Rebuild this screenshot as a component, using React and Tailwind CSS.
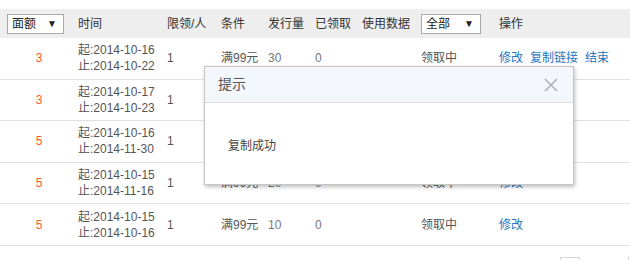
import React from "react";

const rows = [
  { amount: 3, start: "2014-10-16", end: "2014-10-22", limit: 1, cond: "满99元", issued: 30, got: 0, status: "领取中", actions: ["修改", "复制链接", "结束"] },
  { amount: 3, start: "2014-10-17", end: "2014-10-23", limit: 1, cond: "满99元", issued: 30, got: 0, status: "领取中", actions: ["修改"] },
  { amount: 5, start: "2014-10-16", end: "2014-11-30", limit: 1, cond: "满99元", issued: 20, got: 0, status: "领取中", actions: ["修改"] },
  { amount: 5, start: "2014-10-15", end: "2014-11-16", limit: 1, cond: "满99元", issued: 20, got: 0, status: "领取中", actions: ["修改"] },
  { amount: 5, start: "2014-10-15", end: "2014-10-16", limit: 1, cond: "满99元", issued: 10, got: 0, status: "领取中", actions: ["修改"] },
];

const font = { fontFamily: '"Liberation Sans", "Noto Sans CJK SC", sans-serif' };

const FakeSelect = ({ label, width }) => (
  <div className={`flex h-[20px] items-center justify-between border border-[#a9a9a9] bg-white pl-[4px] pr-[6px] text-[12px] text-[#222] ${width}`}>
    <span>{label}</span>
    <span className="text-[10px] leading-none">▼</span>
  </div>
);

const App = () => {
  return (
    <div className="relative h-[260px] w-[630px] overflow-hidden bg-white text-[12px] text-[#555]" style={font}>
      <div className="h-[9px]" />

      {/* Header */}
      <div className="flex h-[29px] items-center bg-[#eeeeee] text-[#333]">
        <div className="w-[78px] pl-[7px]">
          <FakeSelect label="面额" width="w-[57px]" />
        </div>
        <div className="w-[89px]">时间</div>
        <div className="w-[54px]">限领/人</div>
        <div className="w-[47px]">条件</div>
        <div className="w-[47px]">发行量</div>
        <div className="w-[47px]">已领取</div>
        <div className="w-[59px]">使用数据</div>
        <div className="w-[78px]">
          <FakeSelect label="全部" width="w-[60px]" />
        </div>
        <div className="flex-1">操作</div>
      </div>

      {/* Rows */}
      {rows.map((r, i) => (
        <div key={i} className="flex h-[41.6px] items-center border-b border-[#e2e2e2]">
          <div className="w-[78px] text-center text-[#ff5a26]">{r.amount}</div>
          <div className="w-[89px] leading-[16px]">
            <div>起:{r.start}</div>
            <div>止:{r.end}</div>
          </div>
          <div className="w-[54px]">{r.limit}</div>
          <div className="w-[47px]">{r.cond}</div>
          <div className="w-[47px] text-[#777]">{r.issued}</div>
          <div className="w-[47px] text-[#777]">{r.got}</div>
          <div className="w-[59px]" />
          <div className="w-[78px]">{r.status}</div>
          <div className="flex flex-1 gap-[7px] text-[#1e78c2]">
            {r.actions.map((a) => (
              <span key={a}>{a}</span>
            ))}
          </div>
        </div>
      ))}

      {/* Pagination */}
      <div className="flex justify-end gap-[48px] pt-[11px]">
        <div className="h-[20px] w-[20px] border border-[#d5d5d5]" />
        <div className="h-[20px] w-[2px] border-l border-[#d5d5d5]" />
      </div>

      {/* Dialog */}
      <div className="absolute left-[204px] top-[66px] w-[370px] border border-[#c6c6c6] bg-white shadow-[1px_2px_4px_rgba(0,0,0,0.25)]">
        <div className="flex h-[36px] items-center justify-between border-b border-[#dddddd] bg-[#f3f6fb] pl-[13px] pr-[15px]">
          <span className="text-[14px] text-[#555]">提示</span>
          <svg width="14" height="14" viewBox="0 0 14 14" className="text-[#b0b0b0]">
            <path d="M1 1L13 13M13 1L1 13" stroke="currentColor" strokeWidth="1.6" />
          </svg>
        </div>
        <div className="flex h-[81px] items-center pl-[23px] pt-[5px] text-[12px] text-[#444]">复制成功</div>
      </div>
    </div>
  );
};

export default App;
